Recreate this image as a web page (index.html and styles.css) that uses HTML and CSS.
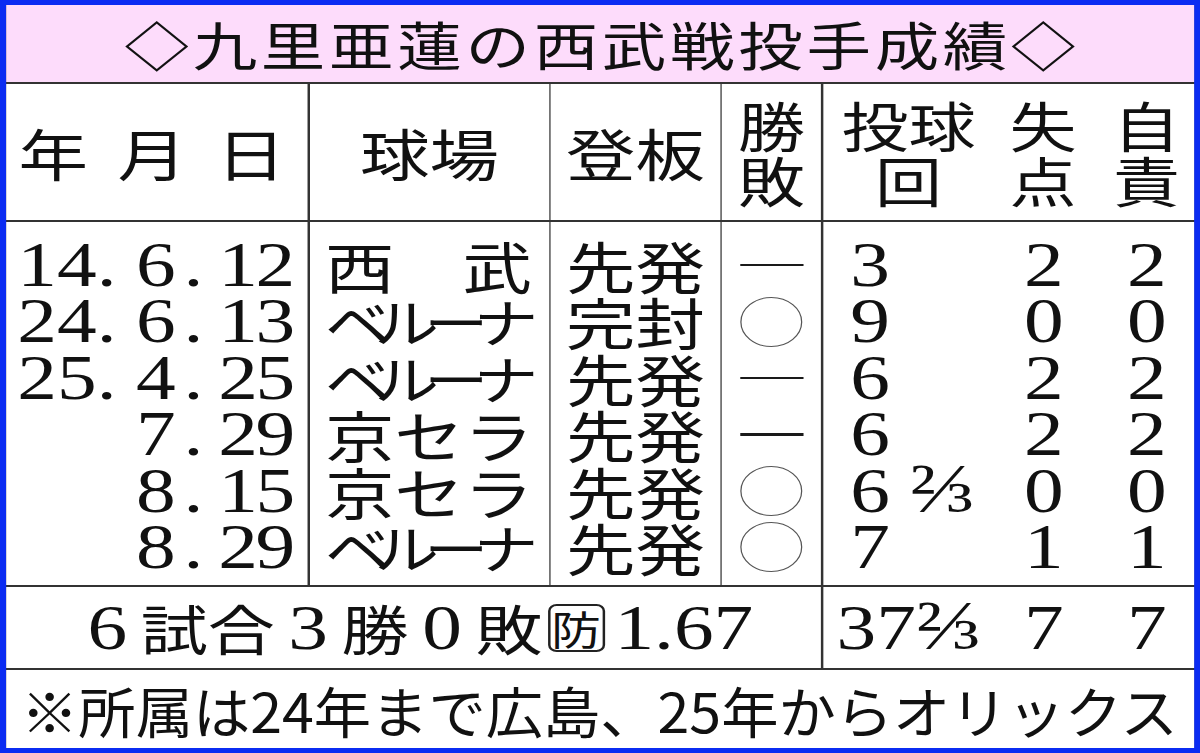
FILE: index.html
```html
<!DOCTYPE html>
<html lang="ja">
<head>
<meta charset="utf-8">
<title>九里亜蓮の西武戦投手成績</title>
<link rel="stylesheet" href="styles.css">
</head>
<body>
<div class="stage">
  <div class="frame">
    <div class="title"><span class="title-text">◇九里亜蓮の西武戦投手成績◇</span></div>

    <div class="h h-date"><span>年</span><span>月</span><span>日</span></div>
    <div class="h">球場</div>
    <div class="h">登板</div>
    <div class="h h2">勝<br>敗</div>
    <div class="h h-stats">
      <div class="hs hs-a">投球<br>回</div>
      <div class="hs hs-b">失<br>点</div>
      <div class="hs hs-c">自<br>責</div>
    </div>

    <div class="c c-date">
      <div class="row"><span class="y">14.</span><span class="m">6</span><span class="dot">.</span><span class="d">12</span></div>
      <div class="row"><span class="y">24.</span><span class="m">6</span><span class="dot">.</span><span class="d">13</span></div>
      <div class="row"><span class="y">25.</span><span class="m">4</span><span class="dot">.</span><span class="d">25</span></div>
      <div class="row"><span class="y"></span><span class="m">7</span><span class="dot">.</span><span class="d">29</span></div>
      <div class="row"><span class="y"></span><span class="m">8</span><span class="dot">.</span><span class="d">15</span></div>
      <div class="row"><span class="y"></span><span class="m">8</span><span class="dot">.</span><span class="d">29</span></div>
    </div>

    <div class="c c-park">
      <div class="row">西武</div>
      <div class="row kana">ベルーナ</div>
      <div class="row kana">ベルーナ</div>
      <div class="row">京セラ</div>
      <div class="row">京セラ</div>
      <div class="row kana">ベルーナ</div>
    </div>

    <div class="c c-role">
      <div class="row">先発</div>
      <div class="row">完封</div>
      <div class="row">先発</div>
      <div class="row">先発</div>
      <div class="row">先発</div>
      <div class="row">先発</div>
    </div>

    <div class="c c-wl">
      <div class="row"><span class="dash" role="img" aria-label="―"></span></div>
      <div class="row"><span class="ring" role="img" aria-label="○"></span></div>
      <div class="row"><span class="dash" role="img" aria-label="―"></span></div>
      <div class="row"><span class="dash" role="img" aria-label="―"></span></div>
      <div class="row"><span class="ring" role="img" aria-label="○"></span></div>
      <div class="row"><span class="ring" role="img" aria-label="○"></span></div>
    </div>

    <div class="c c-stats">
      <div class="row"><span class="ip">3</span><span class="r">2</span><span class="er">2</span></div>
      <div class="row"><span class="ip">9</span><span class="r">0</span><span class="er">0</span></div>
      <div class="row"><span class="ip">6</span><span class="r">2</span><span class="er">2</span></div>
      <div class="row"><span class="ip">6</span><span class="r">2</span><span class="er">2</span></div>
      <div class="row"><span class="ip">6 <span class="frac">⅔</span></span><span class="r">0</span><span class="er">0</span></div>
      <div class="row"><span class="ip">7</span><span class="r">1</span><span class="er">1</span></div>
    </div>

    <div class="t t-left">
      <span class="n">6</span><span class="k">試</span><span class="k">合</span><span class="n">3</span><span class="k">勝</span><span class="n">0</span><span class="k">敗</span><span class="boxed">防</span><span class="era">1.67</span>
    </div>
    <div class="t t-right">
      <span class="ip">37<span class="frac">⅔</span></span><span class="r">7</span><span class="er">7</span>
    </div>

    <div class="foot"><span class="foot-text">※所属は24年まで広島、25年からオリックス</span></div>
  </div>
</div>
</body>
</html>
```

FILE: styles.css
```css
html, body {
  margin: 0;
  padding: 0;
  background: #ffffff;
}

body {
  width: 1200px;
  height: 753px;
  overflow: hidden;
}

/* The whole graphic is set horizontally widened, as in the printed table */
.stage {
  width: 967.74px;
  height: 753px;
  transform: scaleX(1.24);
  transform-origin: 0 0;
}

.frame {
  box-sizing: border-box;
  width: 967.74px;
  height: 753px;
  border-style: solid;
  border-color: #0b2cf2;
  border-width: 5px 5px 5px 5px;
  background: #333333;
  display: grid;
  grid-template-columns: 243.4px 192.7px 136.3px 79.8px 1fr;
  grid-template-rows: 77px 136px 363px 81px 1fr;
  row-gap: 2px;
  column-gap: 1.61px;
  font-family: "Noto Sans CJK JP", "Noto Sans CJK SC", sans-serif;
  color: #111111;
}

/* title */
.title {
  grid-column: 1 / -1;
  background: #fddcfb;
  display: flex;
  align-items: center;
  justify-content: center;
  font-size: 52px;
  line-height: 1;
  letter-spacing: 3px;
  padding-left: 3px;
}

/* header row */
.h {
  background: #ffffff;
  display: flex;
  align-items: center;
  justify-content: center;
  font-size: 56px;
  line-height: 1;
  text-align: center;
}

.h-date {
  justify-content: space-between;
  padding: 0 18px 0 10px;
}

.h2 {
  font-size: 54px;
  line-height: 55px;
}

.h-stats {
  justify-content: flex-start;
  font-size: 54px;
  line-height: 55px;
}

.hs-a { width: 138px; }
.hs-b { width: 79px; }
.hs-c { flex: 1; padding-left: 6px; }

/* data */
.c {
  background: #ffffff;
  padding-top: 15px;
}

.row {
  height: 56.4px;
  line-height: 56.4px;
  white-space: nowrap;
}

.c-date {
  font-family: "Liberation Serif", "DejaVu Serif", serif;
  font-size: 64px;
  padding-left: 9px;
}

.c-date .row { display: flex; }
.c-date .y { width: 93px; }
.c-date .m { width: 34.6px; text-align: right; }
.c-date .dot { width: 16px; margin-left: 6.4px; }
.c-date .d { width: 62px; margin-left: 10px; text-align: right; letter-spacing: -2px; }

.c-park {
  font-size: 56px;
  padding-left: 12px;
}

.c-park .row {
  width: 167px;
  text-align: justify;
  text-align-last: justify;
}

.c-park .kana {
  font-size: 52px;
  letter-spacing: -12px;
  text-align: left;
  text-align-last: left;
}

.c-role {
  font-size: 56px;
  text-align: center;
}

.c-wl .row {
  display: flex;
  align-items: center;
  justify-content: center;
}

.dash {
  display: block;
  width: 51px;
  height: 2.6px;
  background: #1a1a1a;
}

.ring {
  display: block;
  box-sizing: border-box;
  width: 50px;
  height: 50px;
  border: 1.5px solid #555555;
  border-radius: 50%;
}

.c-stats {
  font-family: "Liberation Serif", "DejaVu Serif", serif;
  font-size: 64px;
  padding-left: 22px;
}

.c-stats .row,
.t-right {
  display: flex;
}

.ip { width: 132.3px; }
.r { width: 40px; text-align: right; }
.er { width: 83px; text-align: right; }

.frac {
  font-size: 70px;
  line-height: 0;
}

/* totals row */
.t {
  background: #ffffff;
}

.t-left {
  grid-column: 1 / 5;
  display: flex;
  align-items: center;
  justify-content: center;
  font-size: 54px;
  line-height: 1;
}

.t-left .n {
  display: inline-block;
  width: 54px;
  text-align: center;
  font-family: "Liberation Serif", "DejaVu Serif", serif;
  font-size: 64px;
}

.t-left .k {
  display: inline-block;
  width: 54px;
  text-align: center;
}

.t-left .boxed {
  display: inline-flex;
  align-items: center;
  justify-content: center;
  box-sizing: border-box;
  width: 46px;
  height: 48px;
  margin: 0 4px;
  border: 2px solid #222222;
  border-radius: 7px;
  font-size: 40px;
}

.t-left .era {
  font-family: "Liberation Serif", "DejaVu Serif", serif;
  font-size: 64px;
  margin-left: 4px;
}

.t-right {
  align-items: center;
  font-family: "Liberation Serif", "DejaVu Serif", serif;
  font-size: 64px;
  line-height: 1;
  padding-left: 11px;
}

.t-right .ip { width: 143.3px; }

/* footer */
.foot {
  grid-column: 1 / -1;
  background: #ffffff;
  display: flex;
  align-items: center;
  padding-left: 12px;
  font-size: 55px;
  line-height: 1;
  white-space: nowrap;
}

.foot-text {
  display: inline-block;
  transform: scaleX(0.84);
  transform-origin: 0 50%;
}
```
